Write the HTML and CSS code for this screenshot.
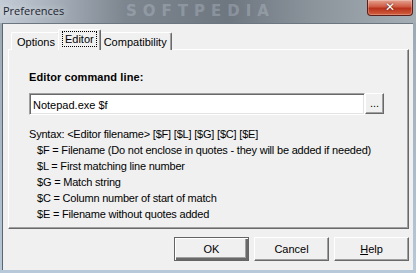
FILE: index.html
```html
<!DOCTYPE html>
<html lang="en">
<head>
    <meta charset="UTF-8">
    <title>Preferences</title>
    <link rel="stylesheet" href="styles.css">
</head>
<body>

<div class="window">
    <div class="titlebar">
        <span class="title">Preferences</span>
        <span class="mark">SOFTPEDIA</span>
        <span class="close">&#x2715;</span>
    </div>

    <div class="client">
        <div class="tabs">
            <span class="tab">Options</span>
            <span class="tab active"><span class="focus">Editor</span></span>
            <span class="tab">Compatibility</span>
        </div>

        <div class="panel">
            <p class="label">Editor command line:</p>
            <div class="row">
                <div class="field">Notepad.exe $f</div>
                <span class="btn browse">...</span>
            </div>
            <div class="syntax">
                <p>Syntax: &lt;Editor filename&gt; [$F] [$L] [$G] [$C] [$E]</p>
                <p class="ind">$F = Filename (Do not enclose in quotes - they will be added if needed)</p>
                <p class="ind">$L = First matching line number</p>
                <p class="ind">$G = Match string</p>
                <p class="ind">$C = Column number of start of match</p>
                <p class="ind">$E = Filename without quotes added</p>
            </div>
        </div>

        <div class="buttons">
            <span class="btn default">OK</span>
            <span class="btn">Cancel</span>
            <span class="btn"><u>H</u>elp</span>
        </div>
    </div>
</div>

</body>
</html>
```

FILE: styles.css
```css
* { margin: 0; padding: 0; box-sizing: border-box; }
body { width: 416px; height: 273px; overflow: hidden; font-family: "Liberation Sans", Arial, sans-serif; font-size: 11px; color: #000; }

.window { width: 416px; height: 273px; display: flex; flex-direction: column; background: linear-gradient(to bottom, #9aa6b2 0%, #b7c8d8 100%); }

/**** title bar ****/
.titlebar { height: 23px; display: flex; align-items: flex-start; position: relative; background: linear-gradient(to right, #c3ccd6 0%, #aab3bd 12%, #7d868f 30%, #6e7780 55%, #8b939b 75%, #a6aeb5 100%); }
.title { font-family: "Open Sans", "DejaVu Sans", sans-serif; font-size: 11px; color: #1c2530; padding: 3px 0 0 3px; text-shadow: 0 0 6px rgba(255,255,255,.7); }
.mark { position: absolute; left: 126px; top: 3px; font-family: "DejaVu Sans", sans-serif; font-weight: 700; font-size: 15px; line-height: 16px; letter-spacing: 6px; color: rgba(205,214,225,.3); }
.close { position: absolute; right: 3px; top: 0; width: 46px; height: 16px; border: 1px solid #5a1f1a; border-top: none; border-radius: 0 0 4px 4px; background: linear-gradient(to bottom, #e4a493 0%, #cf5a43 45%, #b8321c 55%, #d2603e 100%); color: #fff; font-family: "DejaVu Sans", sans-serif; font-weight: 700; font-size: 12px; line-height: 15px; text-align: center; text-shadow: 0 0 2px #401010; box-shadow: inset 0 0 0 1px rgba(255,255,255,.25); }

/**** client ****/
.client { flex: 1; margin: 0 3px 3px 2px; background: #f0f0f0; border-left: 1px solid #5c6670; border-top: 1px solid #6c7680; padding: 5px 4px 0 5px; display: flex; flex-direction: column; }

.tabs { display: flex; align-items: flex-end; height: 21px; padding-left: 3px; position: relative; z-index: 2; }
.tab { height: 18px; padding: 1px 4px 0 4px; line-height: 16px; font-size: 11px; background: #f0f0f0; border: 1px solid #fff; border-bottom: none; border-right: 1px solid #696969; box-shadow: inset -1px 0 0 #a0a0a0; border-radius: 2px 2px 0 0; }
.tab:first-child { padding: 1px 4px 0 5px; }
.tab.active { height: 21px; margin: 0 -2px; padding: 0 3px; position: relative; z-index: 3; }
.focus { display: inline-block; border: 1px dotted #000; padding: 0 2px; line-height: 14px; margin-top: 1px; }

.panel { height: 180px; margin-top: -1px; border: 1px solid #fff; border-right: 1px solid #696969; border-bottom: 1px solid #696969; box-shadow: inset -1px -1px 0 #a0a0a0; padding: 21px 20px 0 20px; }
.label { font-weight: 700; font-size: 11px; height: 13px; line-height: 13px; letter-spacing: 0.1px; }
.row { display: flex; margin-top: 9px; }
.field { width: 336px; height: 22px; border: 1px solid #a0a0a0; border-right-color: #fff; border-bottom-color: #fff; box-shadow: inset 1px 1px 0 #696969, inset -1px -1px 0 #e3e3e3; background: #fff; padding: 3px 3px 0 3px; font-size: 11px; line-height: 16px; }
.btn { display: inline-flex; align-items: center; justify-content: center; background: #f0f0f0; border: 1px solid #fff; border-right-color: #696969; border-bottom-color: #696969; box-shadow: inset -1px -1px 0 #a0a0a0; font-size: 11px; }
.browse { width: 19px; height: 21px; padding-bottom: 2px; }

.syntax { margin-top: 11px; }
.syntax p { height: 16px; line-height: 16px; font-size: 11px; letter-spacing: -0.2px; white-space: nowrap; }
.syntax p.ind { padding-left: 8px; }

/**** buttons ****/
.buttons { display: flex; justify-content: flex-end; gap: 5px; margin-top: 8px; }
.buttons .btn { width: 75px; height: 24px; }
.buttons .btn.default { border: 1px solid #646464; box-shadow: inset 1px 1px 0 #fff, inset -2px -2px 0 #696969, inset -3px -3px 0 #a0a0a0; }
```
